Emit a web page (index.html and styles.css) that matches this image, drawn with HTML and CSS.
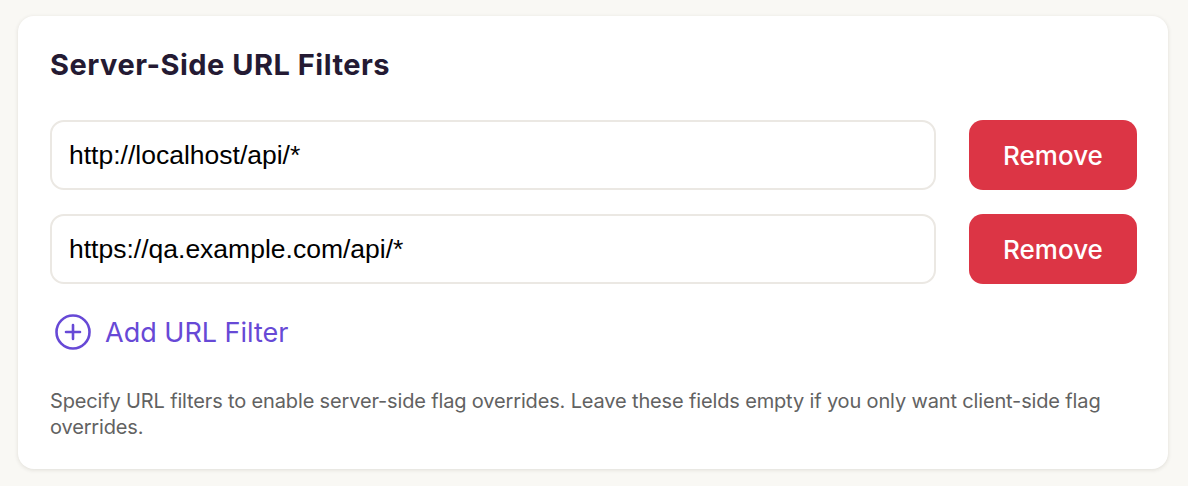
FILE: index.html
```html
<!DOCTYPE html>
<html lang="en">
<head>
<meta charset="utf-8">
<title>Server-Side URL Filters</title>
<link rel="stylesheet" href="styles.css">
</head>
<body>
  <section class="card">
    <h2 class="card-title">Server-Side URL Filters</h2>
    <div class="filters">
      <div class="filter-row">
        <input class="filter-input" type="text" value="http://localhost/api/*">
        <button class="btn-remove" type="button">Remove</button>
      </div>
      <div class="filter-row">
        <input class="filter-input" type="text" value="https://qa.example.com/api/*">
        <button class="btn-remove" type="button">Remove</button>
      </div>
    </div>
    <button class="btn-add" type="button">
      <svg class="add-icon" viewBox="0 0 40 40" width="40" height="40" aria-hidden="true">
        <circle cx="20" cy="20" r="16.5" fill="none" stroke="currentColor" stroke-width="2.6"/>
        <path d="M20 13v14M13 20h14" fill="none" stroke="currentColor" stroke-width="2.6" stroke-linecap="round"/>
      </svg>
      <span>Add URL Filter</span>
    </button>
    <p class="help">Specify URL filters to enable server-side flag overrides. Leave these fields empty if you only want client-side flag overrides.</p>
  </section>
</body>
</html>
```

FILE: styles.css
```css
* { box-sizing: border-box; }

html, body {
  margin: 0;
  background: #f9f8f4;
}

body {
  padding: 16px 20px 16px 18px;
  font-family: Inter, "Noto Sans", sans-serif;
}

.card {
  background: #ffffff;
  border-radius: 16px;
  box-shadow: 0 1px 4px rgba(40, 30, 20, 0.12);
  padding: 32px 31px 29px 32px;
  display: flex;
  flex-direction: column;
}

.card-title {
  margin: 0 0 38px;
  font-size: 29px;
  line-height: 34px;
  font-weight: 700;
  letter-spacing: 0.5px;
  color: #241a33;
}

.filters {
  display: flex;
  flex-direction: column;
  gap: 24px;
}

.filter-row {
  display: flex;
  gap: 33px;
  height: 70px;
}

.filter-input {
  flex: 1;
  min-width: 0;
  height: 70px;
  border: 2px solid #ebe8e3;
  border-radius: 14px;
  padding: 0 17px;
  font-family: "Liberation Sans", Arial, sans-serif;
  font-size: 26.5px;
  color: #000;
  background: #fff;
  outline: none;
}

.btn-remove {
  width: 168px;
  height: 70px;
  border: none;
  border-radius: 14px;
  background: #dc3545;
  color: #fff;
  font-family: Inter, "Noto Sans", sans-serif;
  font-size: 26px;
  font-weight: 500;
  cursor: pointer;
}

.btn-add {
  align-self: flex-start;
  margin-top: 28px;
  display: flex;
  align-items: center;
  gap: 12px;
  padding: 0 0 0 3px;
  border: none;
  background: none;
  color: #6749d6;
  font-family: Inter, "Noto Sans", sans-serif;
  font-size: 27px;
  font-weight: 400;
  height: 40px;
  cursor: pointer;
}

.add-icon {
  display: block;
  flex: none;
}

.help {
  margin: 36px 0 0;
  font-size: 20px;
  line-height: 26px;
  letter-spacing: -0.15px;
  color: #626262;
}
```
